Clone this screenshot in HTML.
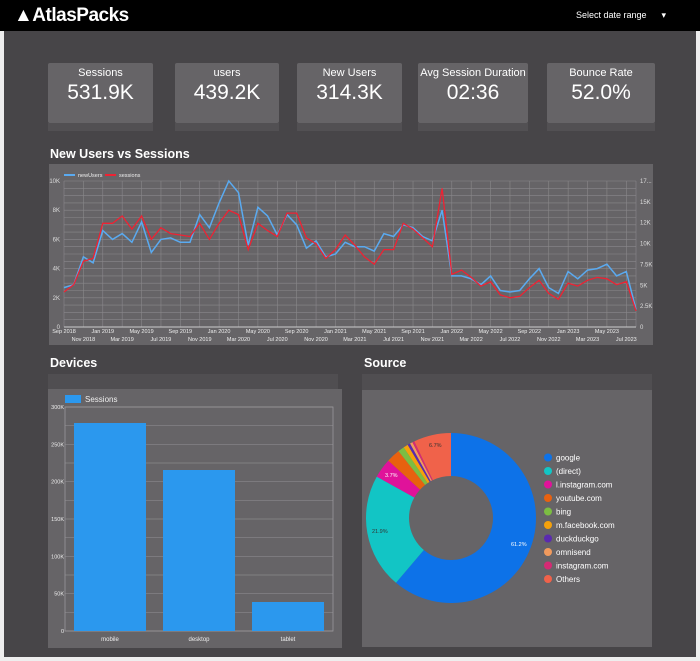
<!DOCTYPE html>
<html><head><meta charset="utf-8"><style>
*{margin:0;padding:0;box-sizing:border-box}
body{width:700px;height:661px;background:#eeeeee;font-family:"Liberation Sans",sans-serif;position:relative;overflow:hidden}
#main{position:absolute;left:4px;top:0;width:692px;height:657px;background:#474548}
#hdr{position:absolute;left:0;top:0;width:700px;height:31px;background:#000}
.logo{position:absolute;left:14px;top:5px;color:#fff;font-size:19px;font-weight:bold;letter-spacing:-0.5px}
.dr{position:absolute;left:576px;top:10px;color:#fff;font-size:9px}
.card{position:absolute;top:63px;height:60px;background:#666467;color:#fff;text-align:center;border-radius:2px}
.card .l{font-size:11px;margin-top:4px}
.card .v{font-size:21px;margin-top:2px}
.sh{position:absolute;top:123px;height:8px;background:#525053}
.t{position:absolute;color:#fff;font-size:12.5px;font-weight:bold}
svg text{font-family:"Liberation Sans",sans-serif}
</style></head><body>
<div id="main"></div>
<div id="hdr"><div class="logo">&#9650;AtlasPacks</div><div class="dr">Select date range &nbsp;&nbsp;&nbsp;&nbsp;&nbsp;▾</div></div>
<div class="card" style="left:48px;width:105px"><div class="l">Sessions</div><div class="v">531.9K</div></div>
<div class="card" style="left:175px;width:104px"><div class="l">users</div><div class="v">439.2K</div></div>
<div class="card" style="left:297px;width:105px"><div class="l">New Users</div><div class="v">314.3K</div></div>
<div class="card" style="left:418px;width:110px"><div class="l">Avg Session Duration</div><div class="v">02:36</div></div>
<div class="card" style="left:547px;width:108px"><div class="l">Bounce Rate</div><div class="v">52.0%</div></div>
<div class="sh" style="left:48px;width:105px"></div><div class="sh" style="left:175px;width:104px"></div><div class="sh" style="left:297px;width:105px"></div><div class="sh" style="left:418px;width:110px"></div><div class="sh" style="left:547px;width:108px"></div>
<div class="t" style="left:50px;top:147px">New Users vs Sessions</div>
<div class="t" style="left:50px;top:356px">Devices</div>
<div class="t" style="left:364px;top:356px">Source</div>
<svg width="700" height="661" style="position:absolute;left:0;top:0" id="s">
<rect x="49" y="164" width="604" height="181" fill="#666467"/>
<rect x="48" y="374" width="290" height="16" fill="#504e51"/>
<rect x="48" y="389" width="294" height="259" fill="#666467"/>
<rect x="362" y="374" width="290" height="16" fill="#504e51"/>
<rect x="362" y="390" width="290" height="257" fill="#666467"/>
<g id="lc"></g><g id="bc"></g><g id="dn"></g>
</svg>
<script>
(function(){
var NS="http://www.w3.org/2000/svg";
function el(p,t,a,txt){var e=document.createElementNS(NS,t);for(var k in a)e.setAttribute(k,a[k]);if(txt!=null)e.textContent=txt;p.appendChild(e);return e}
var lc=document.getElementById('lc');
var x0=64,x1=636,yb=327,yt=181;
for(var i=0;i<=20;i++){var y=yb-(yb-yt)*i/20;el(lc,'line',{x1:x0,x2:x1,y1:y,y2:y,stroke:'#8a888b','stroke-width':0.6})}
var n=60;var dx=(x1-x0)/(n-1);
for(var i=0;i<n;i+=2){var x=x0+dx*i;el(lc,'line',{x1:x,x2:x,y1:yt,y2:yb,stroke:'#8a888b','stroke-width':0.6})}
el(lc,'line',{x1:x1,x2:x1,y1:yt,y2:yb,stroke:'#8a888b','stroke-width':0.6});
el(lc,'line',{x1:x0,x2:x1,y1:yb,y2:yb,stroke:'#ccc','stroke-width':1});
['0','2K','4K','6K','8K','10K'].forEach(function(s,i){el(lc,'text',{x:60,y:yb-(yb-yt)*i/5+2,'font-size':6,fill:'#ddd','text-anchor':'end'},s)});
['0','2.5K','5K','7.5K','10K','12K','15K','17...'].forEach(function(s,i){el(lc,'text',{x:640,y:yb-(yb-yt)*i/7+2,'font-size':6,fill:'#ddd'},s)});
var tl=['Sep 2018','Jan 2019','May 2019','Sep 2019','Jan 2020','May 2020','Sep 2020','Jan 2021','May 2021','Sep 2021','Jan 2022','May 2022','Sep 2022','Jan 2023','May 2023'];
var bl=['Nov 2018','Mar 2019','Jul 2019','Nov 2019','Mar 2020','Jul 2020','Nov 2020','Mar 2021','Jul 2021','Nov 2021','Mar 2022','Jul 2022','Nov 2022','Mar 2023','Jul 2023'];
tl.forEach(function(s,i){el(lc,'text',{x:x0+dx*4*i,y:333,'font-size':5.5,fill:'#eee','text-anchor':'middle'},s)});
bl.forEach(function(s,i){el(lc,'text',{x:x0+dx*(4*i+2),y:341,'font-size':5.5,fill:'#eee','text-anchor':'middle'},s)});
var nu=[2.7,2.9,4.8,4.4,6.6,6.0,6.4,5.8,7.2,5.1,6.0,6.1,5.8,5.8,7.7,6.8,8.5,10.0,9.2,5.6,8.2,7.6,6.3,7.7,7.0,5.4,5.9,4.8,5.0,5.8,5.5,5.5,5.2,6.4,6.2,7.0,6.8,6.2,5.9,8.0,3.5,3.5,3.3,2.9,3.5,2.5,2.4,2.5,3.3,4.0,2.7,2.3,3.8,3.3,3.9,4.0,4.3,3.5,3.8,1.2];
var se=[2.4,2.9,4.5,4.7,7.1,7.1,7.6,6.7,7.6,6.0,6.8,6.4,6.3,6.2,7.1,6.0,7.1,8.0,7.7,5.3,7.1,6.6,6.2,7.8,7.8,6.1,5.7,4.7,5.3,6.3,5.6,4.8,4.3,5.3,5.3,7.1,6.7,6.1,5.5,9.5,3.6,3.9,3.4,2.8,3.1,2.2,2.0,2.1,2.7,3.2,2.3,1.9,3.0,2.8,3.2,3.4,3.3,2.9,3.1,1.1];
function pts(a){return a.map(function(v,i){return (x0+dx*i).toFixed(1)+','+(yb-(yb-yt)*v/10).toFixed(1)}).join(' ')}
el(lc,'polyline',{points:pts(nu),fill:'none',stroke:'#5aaaf0','stroke-width':1.5});
el(lc,'polyline',{points:pts(se),fill:'none',stroke:'#ee2233','stroke-width':1.3});
el(lc,'line',{x1:64,x2:75,y1:175,y2:175,stroke:'#5aaaf0','stroke-width':2});
el(lc,'text',{x:78,y:177,'font-size':5.5,fill:'#eee'},'newUsers');
el(lc,'line',{x1:105,x2:116,y1:175,y2:175,stroke:'#ee2233','stroke-width':2});
el(lc,'text',{x:119,y:177,'font-size':5.5,fill:'#eee'},'sessions');
var bc=document.getElementById('bc');var bx0=65,bx1=333,by0=631,by1=407;
for(var i=0;i<=12;i++){var y=by0-(by0-by1)*i/12;el(bc,'line',{x1:bx0,x2:bx1,y1:y,y2:y,stroke:'#8a888b','stroke-width':0.7})}
el(bc,'rect',{x:bx0,y:by1,width:bx1-bx0,height:by0-by1,fill:'none',stroke:'#9a989b','stroke-width':0.8});
['0','50K','100K','150K','200K','250K','300K'].forEach(function(s,i){el(bc,'text',{x:64,y:by0-(by0-by1)*i/6+2,'font-size':5.5,fill:'#eee','text-anchor':'end'},s)});
[[74,423,'mobile'],[163,470,'desktop'],[252,602,'tablet']].forEach(function(b){el(bc,'rect',{x:b[0],y:b[1],width:72,height:by0-b[1],fill:'#2b98ee'});el(bc,'text',{x:b[0]+36,y:641,'font-size':6,fill:'#eee','text-anchor':'middle'},b[2])});
el(bc,'rect',{x:65,y:395,width:16,height:8,fill:'#2b98ee'});
el(bc,'text',{x:85,y:402,'font-size':8,fill:'#eee'},'Sessions');
var dn=document.getElementById('dn');var cx=451,cy=518,Ro=85,Ri=42;
var sl=[[61.2,'#0d72e8'],[21.9,'#12c5c5'],[3.7,'#e0129a'],[2.6,'#e8610f'],[1.2,'#7cbd42'],[0.9,'#f5a10b'],[0.5,'#5a2ab0'],[0.5,'#f19a5d'],[0.4,'#d62a74'],[7.1,'#f0624a']];
function P(r,a){return (cx+r*Math.sin(a)).toFixed(2)+' '+(cy-r*Math.cos(a)).toFixed(2)}
var acc=0;
sl.forEach(function(s){var a0=acc/100*2*Math.PI,a1=(acc+s[0])/100*2*Math.PI;var lg=(a1-a0)>Math.PI?1:0;
var d='M'+P(Ro,a0)+' A'+Ro+' '+Ro+' 0 '+lg+' 1 '+P(Ro,a1)+' L'+P(Ri,a1)+' A'+Ri+' '+Ri+' 0 '+lg+' 0 '+P(Ri,a0)+' Z';
el(dn,'path',{d:d,fill:s[1]});acc+=s[0]});
el(dn,'text',{x:511,y:546,'font-size':5.5,fill:'#fff'},'61.2%');
el(dn,'text',{x:372,y:533,'font-size':5.5,fill:'#333'},'21.9%');
el(dn,'text',{x:385,y:477,'font-size':5.5,fill:'#fff'},'3.7%');
el(dn,'text',{x:429,y:447,'font-size':5.5,fill:'#333'},'6.7%');
var lgd=[['google','#0d72e8'],['(direct)','#12c5c5'],['l.instagram.com','#e0129a'],['youtube.com','#e8610f'],['bing','#7cbd42'],['m.facebook.com','#f5a10b'],['duckduckgo','#5a2ab0'],['omnisend','#f19a5d'],['instagram.com','#d62a74'],['Others','#f0624a']];
lgd.forEach(function(l,i){var y=457.5+i*13.5;el(dn,'circle',{cx:548,cy:y,r:4,fill:l[1]});el(dn,'text',{x:556,y:y+3,'font-size':8,fill:'#fff'},l[0])});
})();
</script>
</body></html>
